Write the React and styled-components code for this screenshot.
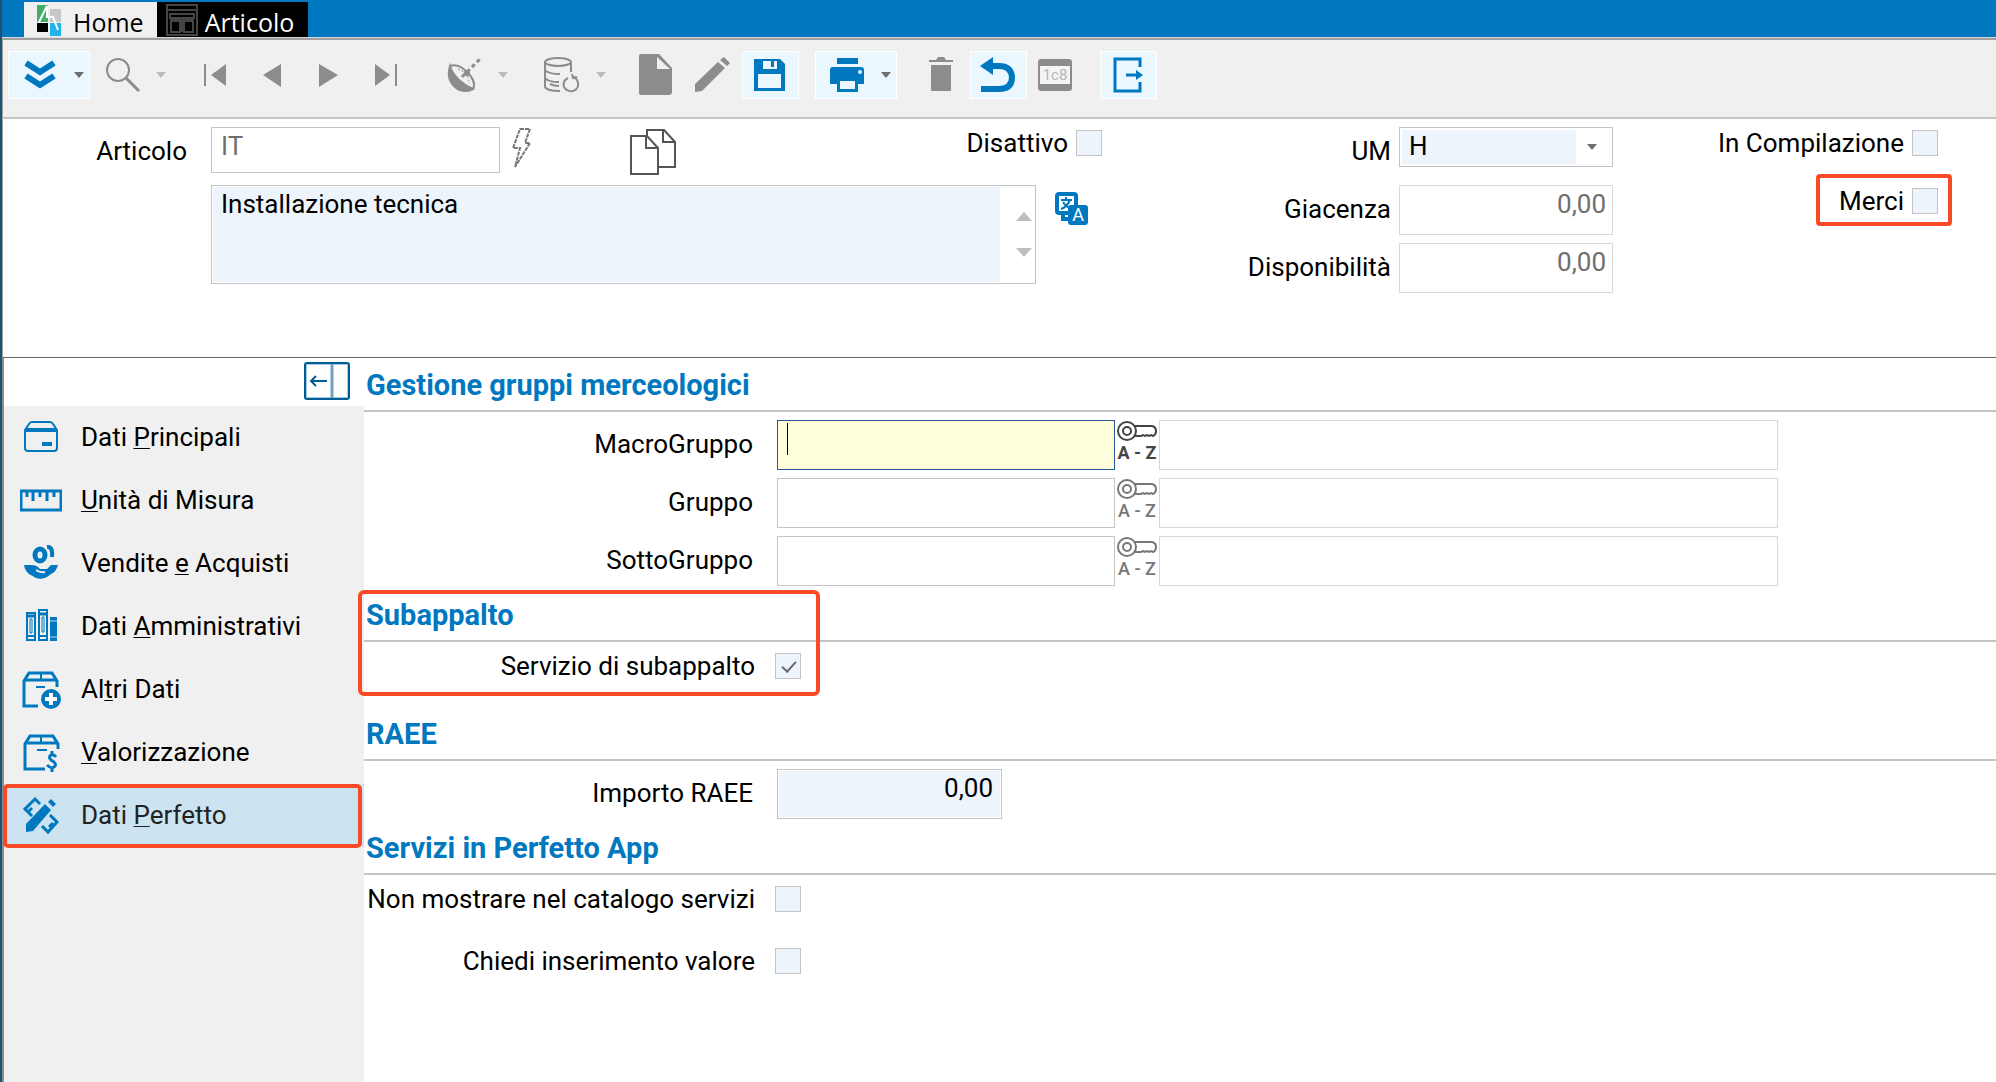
import React, { useState } from "react";
import styled, { createGlobalStyle } from "styled-components";

const BLUE = "#0078c0";
const GREY = "#8c8c8c";

const menu = [
	{ before: "Dati ", key: "P", after: "rincipali", icon: "box" },
	{ before: "", key: "U", after: "nità di Misura", icon: "ruler" },
	{ before: "Vendite ", key: "e", after: " Acquisti", icon: "hand" },
	{ before: "Dati ", key: "A", after: "mministrativi", icon: "books" },
	{ before: "Al", key: "t", after: "ri Dati", icon: "boxPlus" },
	{ before: "", key: "V", after: "alorizzazione", icon: "boxDollar" },
	{ before: "Dati ", key: "P", after: "erfetto", icon: "tools" },
];

const groups = [
	{ id: "macro", label: "MacroGruppo" },
	{ id: "gruppo", label: "Gruppo" },
	{ id: "sotto", label: "SottoGruppo" },
];

const menuIcons = {
	box: (
		<g fill="none" stroke={BLUE} strokeWidth="2">
			<path d="M5 13 V31 Q5 34 8 34 H34 Q37 34 37 31 V13 L33 7 Q32 5 30 5 H12 Q10 5 9 7 Z" />
			<path d="M5 13 H37" strokeWidth="4" />
			<path d="M22 27 H32" strokeWidth="4" />
		</g>
	),
	ruler: (
		<g fill="none" stroke={BLUE} strokeWidth="3">
			<path d="M1 11 H41 V30 H1 Z" />
			<path d="M7 12 V17 M13 12 V21 M20 12 V17 M27 12 V21 M34 12 V17" />
		</g>
	),
	hand: (
		<g>
			<ellipse cx="20" cy="12" rx="5" ry="6" fill="#f0f0f0" stroke={BLUE} strokeWidth="5" />
			<path d="M27 4 Q33 3 32 14" fill="none" stroke={BLUE} strokeWidth="4" />
			<path
				d="M4 22 H11 Q17 22 20 26 H27 L31 22 H38 Q36 29 31 31 L27 34 Q22 37 16 35 L9 31 Q5 28 4 22 Z"
				fill={BLUE}
			/>
			<path d="M16 27 Q20 30 25 29" fill="none" stroke="#f0f0f0" strokeWidth="2" />
		</g>
	),
	books: (
		<g fill="none" stroke={BLUE} strokeWidth="2">
			<path d="M7 7 H15 V34 H7 Z M19 4 H27 V34 H19 Z" />
			<path d="M7 10 H15 M19 8 H27" strokeWidth="3" />
			<path d="M10 13 H12 V27 H10 Z M22 11 H24 V26 H22 Z" strokeWidth="1" />
			<path d="M7 30 H15 M19 30 H27" />
			<path d="M31 12 H36 V34 H31 Z" fill={BLUE} />
			<path d="M30 15 H37 M30 31 H37" stroke="#b9d6e8" strokeWidth="1" />
		</g>
	),
	boxPlus: (
		<g fill="none" stroke={BLUE} strokeWidth="2">
			<path d="M18 37 H4 V12 L9 4 H32 L37 12 V18" strokeWidth="3" />
			<path d="M4 11 H37" strokeWidth="3" />
			<path d="M21 4 V11 M16 18 H25" />
			<circle cx="31" cy="30" r="10" fill={BLUE} stroke="none" />
			<path d="M31 24 V36 M25 30 H37" stroke="#fff" strokeWidth="4" />
		</g>
	),
	boxDollar: (
		<g fill="none" stroke={BLUE} strokeWidth="2">
			<path d="M25 37 H5 V12 L10 4 H33 L38 12 V17" strokeWidth="3" />
			<path d="M5 11 H38" strokeWidth="3" />
			<path d="M21 4 V11 M17 18 H27" />
			<path
				d="M36 25 Q34 22 31 23 Q28 25 31 28 L34 30 Q37 33 34 35 Q31 37 27 33 M32 19 V24 M32 35 V40"
				strokeWidth="3"
			/>
		</g>
	),
	tools: (
		<g fill="none" stroke={BLUE} strokeWidth="3">
			<path d="M12 21 L5 14 L15 4 L20 9 M9 16 L12 13" />
			<path d="M30 20 L37 27 L28 37 L22 31 M29 32 L33 28" />
			<path d="M6 37 V29 L25 9 L31 15 L13 36 Z" fill={BLUE} stroke="none" />
			<path d="M28 7 L31 4 L36 9 L33 12 Z" fill={BLUE} stroke="none" />
		</g>
	),
};

const CaretDown = ({ color }) => (
	<svg width="10" height="6" viewBox="0 0 10 6" aria-hidden="true">
		<path d="M0 0 H10 L5 6 Z" fill={color} />
	</svg>
);

const icons = {
	chevrons: (
		<g fill="none" stroke={BLUE} strokeWidth="6">
			<path d="M6 9 L20 18 L34 9 M6 22 L20 31 L34 22" />
		</g>
	),
	search: (
		<g fill="none" stroke={GREY} strokeWidth="2">
			<circle cx="16" cy="16" r="11" />
			<path d="M24 24 L37 37" strokeWidth="3" />
		</g>
	),
	first: (
		<g fill={GREY}>
			<path d="M9 10 H11 V32 H9 Z M31 10 V32 L16 21 Z" />
		</g>
	),
	prev: <path d="M29 10 V33 L11 21 Z" fill={GREY} />,
	next: <path d="M10 10 V33 L29 21 Z" fill={GREY} />,
	last: (
		<g fill={GREY}>
			<path d="M9 10 V32 L24 21 Z M29 10 H31 V32 H29 Z" />
		</g>
	),
	dish: (
		<g>
			<path d="M6 12 Q2 25 11 33 Q19 40 29 35 Q20 31 14 25 Q8 19 6 12 Z" fill={GREY} stroke={GREY} strokeWidth="2" />
			<path d="M6 12 Q14 9 23 18 Q33 28 29 35" fill="none" stroke={GREY} strokeWidth="2" />
			<path d="M14 15 L22 19 L26 30" fill="none" stroke={GREY} strokeWidth="1" strokeDasharray="2 2" />
			<circle cx="23" cy="19" r="3" fill={GREY} />
			<path d="M18 23 L37 4" stroke={GREY} strokeWidth="3" strokeDasharray="4 3" />
		</g>
	),
	database: (
		<g fill="none" stroke={GREY} strokeWidth="2">
			<ellipse cx="16" cy="8" rx="13" ry="4" />
			<path d="M3 8 V33 Q5 37 18 37 M29 8 V18 M3 16 Q6 20 18 20 M3 24 Q6 28 17 28 M8 30 Q12 32 17 32" />
			<path d="M26 24 Q20 27 22 33 Q25 38 31 37 Q37 35 36 29 Q35 24 31 23 M30 20 L31 24 L35 23" />
		</g>
	),
	file: (
		<g>
			<path d="M4 2 Q4 0 6 0 H24 L37 14 V38 Q37 41 34 41 H6 Q4 41 4 39 Z" fill={GREY} />
			<path d="M22 3 V15 H35 Z" fill="#f0f0f0" />
		</g>
	),
	pencil: (
		<g fill={GREY}>
			<path d="M3 30 L26 8 L33 14 L10 37 L3 38 Z M28 6 L32 3 L38 9 L35 12 Z" />
		</g>
	),
	save: (
		<g>
			<path d="M5 5 H31 L36 10 V37 H5 Z" fill={BLUE} />
			<path d="M14 7 H28 V15 H14 Z M9 20 H32 V34 H9 Z" fill="#eaf7ff" />
			<path d="M22 7 H25 V13 H22 Z" fill={BLUE} />
		</g>
	),
	print: (
		<g fill={BLUE}>
			<path d="M10 4 H31 V10 H10 Z M6 13 H34 Q37 13 37 16 V30 H3 V16 Q3 13 6 13 Z M10 26 H31 V38 H10 Z" />
			<path d="M13 27 H28 V35 H13 Z" fill="#eaf7ff" />
			<circle cx="33" cy="18" r="2" fill="#eaf7ff" />
		</g>
	),
	trash: (
		<g fill={GREY}>
			<path d="M9 6 H16 L18 3 H24 L26 6 H33 V8 H9 Z M11 11 H31 V36 Q31 37 30 37 H12 Q11 37 11 36 Z" />
		</g>
	),
	undo: (
		<g>
			<path d="M4 35 H22 Q35 35 35 23 Q34 12 22 12 H14" fill="none" stroke={BLUE} strokeWidth="6" />
			<path d="M3 12 L16 3 V21 Z" fill={BLUE} />
		</g>
	),
	card: (
		<g>
			<rect x="4" y="5" width="34" height="32" rx="3" fill={GREY} />
			<rect x="6" y="12" width="30" height="18" fill="#f4f4f4" />
			<text x="21" y="26" textAnchor="middle" fontFamily="Roboto, sans-serif" fontSize="15" fill="#b4b4b4">
				1c8
			</text>
		</g>
	),
	exit: (
		<g fill="none" stroke={BLUE} strokeWidth="3">
			<path d="M33 13 V5 H8 V37 H33 V28" />
			<path d="M19 21 H32" />
			<path d="M29 16 L36 21 L29 26 Z" fill={BLUE} stroke="none" />
		</g>
	),
};

const toolbar = [
	[
		{ icon: "chevrons", label: "Altro", active: true, drop: true },
		{ icon: "search", label: "Cerca", drop: true },
	],
	[
		{ icon: "first", label: "Primo" },
		{ icon: "prev", label: "Precedente" },
		{ icon: "next", label: "Successivo" },
		{ icon: "last", label: "Ultimo" },
	],
	[{ icon: "dish", label: "Radar", drop: true }],
	[{ icon: "database", label: "Aggiorna", drop: true }],
	[
		{ icon: "file", label: "Nuovo" },
		{ icon: "pencil", label: "Modifica" },
		{ icon: "save", label: "Salva", active: true },
	],
	[{ icon: "print", label: "Stampa", active: true, drop: true }],
	[
		{ icon: "trash", label: "Elimina" },
		{ icon: "undo", label: "Annulla", active: true },
		{ icon: "card", label: "Codice" },
	],
	[{ icon: "exit", label: "Esci", active: true }],
];

const KeyIcon = () => (
	<svg width="42" height="22" viewBox="0 0 42 22" fill="none" stroke="currentColor" strokeWidth="2" aria-hidden="true">
		<circle cx="11" cy="11" r="9" />
		<circle cx="11" cy="11" r="4" />
		<path d="M19 6 H36 Q40 7 40 11 Q40 15 37 16 L35 15 L33 16 L31 15 L29 16 L27 15 L25 16 H19" />
	</svg>
);

const App = () => {
	const [selected, setSelected] = useState(6);
	const [checks, setChecks] = useState({ subappalto: true });

	const tick = (name) => ({
		id: name,
		type: "checkbox",
		checked: !!checks[name],
		onChange: () => setChecks({ ...checks, [name]: !checks[name] }),
	});

	return (
		<Container>
			<GlobalStyle />
			<TitleBar>
				<Tab>
					<svg width="26" height="32" viewBox="0 0 26 32" aria-hidden="true">
						<path d="M1 1 H12 V18 H1 Z" fill="#3fae6a" />
						<path d="M14 5 H25 V18 H14 Z" fill="#c8c8c8" />
						<path d="M1 19 H12 V28 H1 Z" fill="#000" />
						<path d="M14 19 H25 V32 H14 Z" fill="#22b4e8" />
						<path d="M3 18 L11 2 V13 H17 L22 26" fill="none" stroke="#fff" strokeWidth="2" />
					</svg>
					<span>Home</span>
				</Tab>
				<Tab $active>
					<svg width="32" height="32" viewBox="0 0 32 32" fill="none" stroke="#444" strokeWidth="2" aria-hidden="true">
						<path d="M1 1 H31 V31 H1 Z M1 6 H31 M4 10 H28 V14 H4 Z M5 17 H14 V28 H5 Z M18 17 H27 V28 H18 Z" />
						<path d="M16 15 V28 M4 16 H28" />
					</svg>
					<span>Articolo</span>
				</Tab>
			</TitleBar>

			<Toolbar>
				{toolbar.map((group, i) => (
					<ToolGroup key={i}>
						{group.map((t) => (
							<ToolButton key={t.icon} type="button" aria-label={t.label} $active={t.active} $drop={t.drop}>
								<svg width="41" height="42" viewBox="0 0 41 42" aria-hidden="true">
									{icons[t.icon]}
								</svg>
								{t.drop && <CaretDown color={t.active ? "#6e6e6e" : "#bcbcbc"} />}
							</ToolButton>
						))}
					</ToolGroup>
				))}
			</Toolbar>

			<Header>
				<HeaderMain>
					<HeaderRow>
						<HeaderLabel htmlFor="articolo">Articolo</HeaderLabel>
						<CodeInput id="articolo" defaultValue="IT" />
						<BoltButton type="button" aria-label="Codifica rapida">
							<svg width="22" height="42" viewBox="0 0 22 42" fill="none" stroke="#777" strokeWidth="2" aria-hidden="true">
								<path d="M9 2 H19 L14 16 H19 L4 40 L9 21 H2 Z" strokeDasharray="4 1" />
							</svg>
						</BoltButton>
						<CopyButton type="button" aria-label="Duplica">
							<svg width="46" height="46" viewBox="0 0 46 46" fill="none" stroke="#555" strokeWidth="2" aria-hidden="true">
								<path d="M17 7 V1 H34 L45 13 V38 H29" />
								<path d="M33 1 V13 H45" />
								<path d="M1 7 H17 L28 19 V45 H1 Z" />
								<path d="M16 7 V19 H28" />
							</svg>
						</CopyButton>
						<CheckLine>
							<label htmlFor="disattivo">Disattivo</label>
							<Check {...tick("disattivo")} />
						</CheckLine>
					</HeaderRow>
					<HeaderRow>
						<HeaderLabel as="span" />
						<MemoBox>
							<Memo aria-label="Descrizione" defaultValue="Installazione tecnica" />
							<MemoScroll>
								<svg width="16" height="46" viewBox="0 0 16 46" fill="#bdbdbd" aria-hidden="true">
									<path d="M0 9 L8 0 L16 9 Z M0 36 L8 45 L16 36 Z" />
								</svg>
							</MemoScroll>
						</MemoBox>
						<TranslateButton type="button" aria-label="Traduzioni">
							<svg width="34" height="34" viewBox="0 0 34 34" aria-hidden="true">
								<rect x="2" y="2" width="19" height="19" rx="2" fill="#fff" stroke={BLUE} strokeWidth="4" />
								<path d="M6 8 H17 M11 5 V8 M15 8 Q12 15 6 17 M8 10 Q11 15 17 17" fill="none" stroke={BLUE} strokeWidth="2" />
								<path d="M8 21 V27 H13" fill="none" stroke={BLUE} strokeWidth="4" />
								<rect x="13" y="13" width="20" height="20" rx="3" fill={BLUE} />
								<text x="23" y="29" textAnchor="middle" fontFamily="Roboto, sans-serif" fontSize="18" fill="#fff">
									A
								</text>
							</svg>
						</TranslateButton>
					</HeaderRow>
				</HeaderMain>

				<HeaderStock>
					<label htmlFor="um">UM</label>
					<SelectBox>
						<Select id="um" defaultValue="H">
							<option>H</option>
						</Select>
						<CaretDown color="#6e6e6e" />
					</SelectBox>
					<label htmlFor="giacenza">Giacenza</label>
					<NumberInput id="giacenza" defaultValue="0,00" readOnly />
					<label htmlFor="disponibilita">Disponibilità</label>
					<NumberInput id="disponibilita" defaultValue="0,00" readOnly />
				</HeaderStock>

				<HeaderFlags>
					<CheckLine>
						<label htmlFor="compilazione">In Compilazione</label>
						<Check {...tick("compilazione")} />
					</CheckLine>
					<CheckLine>
						<label htmlFor="merci">Merci</label>
						<Check {...tick("merci")} />
						<MerciFrame />
					</CheckLine>
				</HeaderFlags>
			</Header>

			<Body>
				<Sidebar>
					<SidebarTop>
						<IconButton type="button" aria-label="Comprimi menu">
							<svg width="46" height="38" viewBox="0 0 46 38" fill="none" stroke="#005c99" strokeWidth="2" aria-hidden="true">
								<rect x="2" y="2" width="42" height="34" stroke="#a9cade" />
								<rect x="1" y="1" width="44" height="36" rx="2" />
								<path d="M28 2 V36" stroke="#6fa3c6" strokeWidth="3" />
								<path d="M7 19 H23 M12 14 L7 19 L12 24" />
							</svg>
						</IconButton>
					</SidebarTop>
					{menu.map((m, i) => (
						<MenuItem key={m.icon} type="button" $selected={i === selected} onClick={() => setSelected(i)}>
							<svg width="42" height="40" viewBox="0 0 42 40" aria-hidden="true">
								{menuIcons[m.icon]}
							</svg>
							<span>
								{m.before}
								<u>{m.key}</u>
								{m.after}
							</span>
						</MenuItem>
					))}
				</Sidebar>

				<Content>
					<Title>Gestione gruppi merceologici</Title>
					<Fields>
						{groups.map((g, i) => (
							<Row key={g.id}>
								<RowLabel htmlFor={g.id}>{g.label}</RowLabel>
								<GroupCell>
									<GroupInput id={g.id} $focused={i === 0} />
									{i === 0 && <TextCursor />}
								</GroupCell>
								<KeyButton type="button" aria-label={`Cerca ${g.label}`} $strong={i === 0}>
									<KeyIcon />
									<span>A - Z</span>
								</KeyButton>
								<DescInput aria-label={`Descrizione ${g.label}`} readOnly />
							</Row>
						))}
					</Fields>

					<Section>
						<Title>Subappalto</Title>
						<CheckFields>
							<CheckRow>
								<CheckLabel htmlFor="subappalto">Servizio di subappalto</CheckLabel>
								<Check {...tick("subappalto")} />
							</CheckRow>
						</CheckFields>
						<SectionFrame />
					</Section>

					<Title>RAEE</Title>
					<Fields>
						<Row>
							<RowLabel htmlFor="raee">Importo RAEE</RowLabel>
							<AmountInput id="raee" defaultValue="0,00" />
						</Row>
					</Fields>

					<Title>Servizi in Perfetto App</Title>
					<CheckFields>
						<CheckRow>
							<CheckLabel htmlFor="catalogo">Non mostrare nel catalogo servizi</CheckLabel>
							<Check {...tick("catalogo")} />
						</CheckRow>
						<CheckRow>
							<CheckLabel htmlFor="valore">Chiedi inserimento valore</CheckLabel>
							<Check {...tick("valore")} />
						</CheckRow>
					</CheckFields>
				</Content>
			</Body>
		</Container>
	);
};

export default App;

const GlobalStyle = createGlobalStyle`
	* {
		box-sizing: border-box;
	}
	body {
		margin: 0;
		background: #fff;
		color: #000;
		font-family: Roboto, sans-serif;
		font-size: 26px;
		line-height: 30px;
	}
	button, input, select, textarea {
		margin: 0;
		border-radius: 0;
		font: inherit;
		color: inherit;
		outline: none;
	}
	svg {
		display: block;
		flex: none;
	}
`;

const Container = styled.div`
	display: flex;
	flex-direction: column;
	min-height: 100vh;
	border-left: 2px solid #1d5275;
`;

const TitleBar = styled.div`
	display: flex;
	height: 38px;
	padding: 2px 0 0 22px;
	background: ${BLUE};
	border-bottom: 1px solid #d8d8d8;
`;

const Tab = styled.button`
	display: flex;
	align-items: center;
	gap: ${(props) => (props.$active ? 7 : 11)}px;
	padding: ${(props) => (props.$active ? "0 14px 0 9px" : "0 13px 0 12px")};
	border: 0;
	background: ${(props) => (props.$active ? "#000" : "#f0f0f0")};
	color: ${(props) => (props.$active ? "#fff" : "#000")};
	font-family: "Open Sans", sans-serif;
	font-size: 25px;

	span {
		padding-top: 4px;
	}
`;

const Toolbar = styled.div`
	display: flex;
	gap: 16px;
	height: 81px;
	padding: 11px 5px 0;
	background: #f0f0f0;
	border-top: 2px solid #a0a0a0;
	border-left: 1px solid #a0a0a0;
	border-bottom: 2px solid #c4c4c4;
`;

const ToolGroup = styled.div`
	display: flex;
`;

const ToolButton = styled.button`
	display: flex;
	align-items: center;
	gap: ${(props) => (props.$drop ? 13 : 0)}px;
	width: ${(props) => (props.$drop ? 82 : 57)}px;
	height: 48px;
	padding: 0 0 0 ${(props) => (props.$drop ? 11 : 6)}px;
	border: 1px solid ${(props) => (props.$active ? "#fff" : "transparent")};
	background: ${(props) => (props.$active ? "#eaf7ff" : "transparent")};
`;

const Header = styled.div`
	display: flex;
	min-height: 239px;
	padding: 8px 58px 0 0;
	border-left: 1px solid #a0a0a0;
	border-bottom: 1px solid #666;
`;

const HeaderMain = styled.div`
	display: flex;
	flex: 1;
	flex-direction: column;
	gap: 10px;
	min-width: 0;
`;

const HeaderRow = styled.div`
	display: flex;
	align-items: flex-start;
	min-height: 48px;
`;

const HeaderLabel = styled.label`
	flex: none;
	width: 208px;
	padding: 9px 24px 0 0;
	text-align: right;
`;

const TextInput = styled.input`
	min-width: 0;
	padding: 3px 8px 15px;
	border: 1px solid #c4c4c4;
	background: #fff;
	line-height: 30px;
	height: 50px;
`;

const CodeInput = styled(TextInput)`
	width: 289px;
	height: 46px;
	padding: 3px 9px 11px;
	color: #6e6e6e;
`;

const IconButton = styled.button`
	flex: none;
	align-self: flex-start;
	padding: 0;
	border: 0;
	background: transparent;
`;

const BoltButton = styled(IconButton)`
	margin-left: 11px;
`;

const CopyButton = styled(IconButton)`
	padding-top: 2px;
	margin: 0 auto 0 97px;
`;

const CheckLine = styled.div`
	position: relative;
	display: flex;
	align-items: center;
	gap: 8px;
	height: 32px;
`;

const Check = styled.input`
	appearance: none;
	flex: none;
	width: 26px;
	height: 26px;
	border: 1px solid #c4c4c4;
	background: #edf4fc;

	&:checked::after {
		content: "";
		display: block;
		width: 6px;
		height: 12px;
		margin: 4px 0 0 9px;
		border: solid #6a6a6a;
		border-width: 0 2px 2px 0;
		transform: rotate(42deg);
	}
`;

const MemoBox = styled.div`
	display: flex;
	flex: 1;
	height: 99px;
	border: 1px solid #c4c4c4;
	padding: 1px;
`;

const Memo = styled.textarea`
	flex: 1;
	min-width: 0;
	padding: 2px 8px;
	border: 0;
	resize: none;
	overflow: hidden;
	background: #edf4fc;
`;

const MemoScroll = styled.div`
	display: flex;
	align-items: center;
	justify-content: flex-end;
	width: 34px;
	padding-right: 2px;
`;

const TranslateButton = styled(IconButton)`
	width: 66px;
	padding: 7px 0 0 19px;
`;

const HeaderStock = styled.div`
	display: grid;
	grid-template-columns: 289px 214px;
	column-gap: 8px;
	row-gap: 8px;
	align-content: start;

	label {
		padding-top: 9px;
		text-align: right;
	}
`;

const SelectBox = styled.div`
	display: flex;
	align-items: center;
	gap: 11px;
	height: 40px;
	margin-bottom: 10px;
	padding: 2px;
	border: 1px solid #c4c4c4;
`;

const Select = styled.select`
	appearance: none;
	width: 174px;
	height: 34px;
	padding: 0 7px 2px;
	border: 0;
	background: #edf4fc;
`;

const NumberInput = styled(TextInput)`
	width: 100%;
	padding-right: 6px;
	border-color: #d8d8d8;
	color: #6e6e6e;
	text-align: right;
`;

const HeaderFlags = styled.div`
	display: flex;
	flex-direction: column;
	align-items: flex-end;
	gap: 26px;
	width: 325px;
`;

const MerciFrame = styled.div`
	position: absolute;
	inset: -11px -14px -9px -23px;
	border: 4px solid #f84a25;
	border-radius: 4px;
	pointer-events: none;
`;

const Body = styled.div`
	display: flex;
	flex: 1;
	border-left: 2px solid #8c8c8c;
`;

const Sidebar = styled.nav`
	display: flex;
	flex: none;
	flex-direction: column;
	width: 360px;
	background: #f0f0f0;
`;

const SidebarTop = styled.div`
	display: flex;
	justify-content: flex-end;
	height: 48px;
	padding: 4px 14px 0 0;
	background: #fff;
`;

const MenuItem = styled.button`
	position: relative;
	display: flex;
	align-items: center;
	gap: 19px;
	height: 63px;
	padding: 0 16px 2px;
	border: 0;
	background: ${(props) => (props.$selected ? "#cce3f1" : "transparent")};
	color: ${(props) => (props.$selected ? "#222" : "#000")};
	text-align: left;

	u {
		text-decoration-thickness: 1px;
		text-underline-offset: 2px;
		text-decoration-skip-ink: none;
	}

	&::after {
		content: "";
		display: ${(props) => (props.$selected ? "block" : "none")};
		position: absolute;
		inset: 0 2px -1px -1px;
		border: 4px solid #f84a25;
		border-radius: 5px;
	}
`;

const Content = styled.main`
	flex: 1;
	min-width: 0;
`;

const Title = styled.h2`
	height: 54px;
	margin: 0;
	padding: 11px 2px 0;
	border-bottom: 2px solid #c4c4c4;
	color: ${BLUE};
	font-size: 29px;
	font-weight: 700;
	line-height: 32px;
`;

const Fields = styled.div`
	display: flex;
	flex-direction: column;
	gap: 8px;
	padding: 8px 0 2px;
`;

const Row = styled.div`
	display: flex;
	padding-right: 218px;
`;

const RowLabel = styled.label`
	flex: none;
	width: 413px;
	padding: 9px 24px 0 0;
	text-align: right;
`;

const GroupCell = styled.div`
	position: relative;
	flex: none;
	width: 338px;
`;

const GroupInput = styled(TextInput)`
	display: block;
	width: 100%;
	border-color: ${(props) => (props.$focused ? "#2b579a" : "#c4c4c4")};
	background: ${(props) => (props.$focused ? "#ffffdc" : "#fff")};
`;

const TextCursor = styled.span`
	position: absolute;
	left: 10px;
	top: 3px;
	width: 1px;
	height: 32px;
	background: #000;
`;

const KeyButton = styled(IconButton)`
	display: flex;
	flex-direction: column;
	align-items: center;
	width: 44px;
	color: ${(props) => (props.$strong ? "#444" : "#777")};
	font-size: 18px;
	font-weight: ${(props) => (props.$strong ? 700 : 500)};
	line-height: 22px;
	white-space: nowrap;
`;

const DescInput = styled(TextInput)`
	flex: 1;
	border-color: #d8d8d8;
`;

const AmountInput = styled(TextInput)`
	width: 225px;
	background: #edf4fc;
	text-align: right;
	box-shadow: inset 0 0 0 1px #fff;
`;

const Section = styled.section`
	position: relative;
`;

const SectionFrame = styled.div`
	position: absolute;
	left: -6px;
	top: 2px;
	width: 462px;
	height: 106px;
	border: 4px solid #f84a25;
	border-radius: 6px;
	pointer-events: none;
`;

const CheckFields = styled.div`
	display: flex;
	flex-direction: column;
	gap: 14px;
	padding-bottom: 17px;
`;

const CheckRow = styled.div`
	display: flex;
	align-items: center;
	gap: 20px;
	height: 48px;
`;

const CheckLabel = styled.label`
	flex: none;
	width: 391px;
	text-align: right;
	white-space: nowrap;
`;
